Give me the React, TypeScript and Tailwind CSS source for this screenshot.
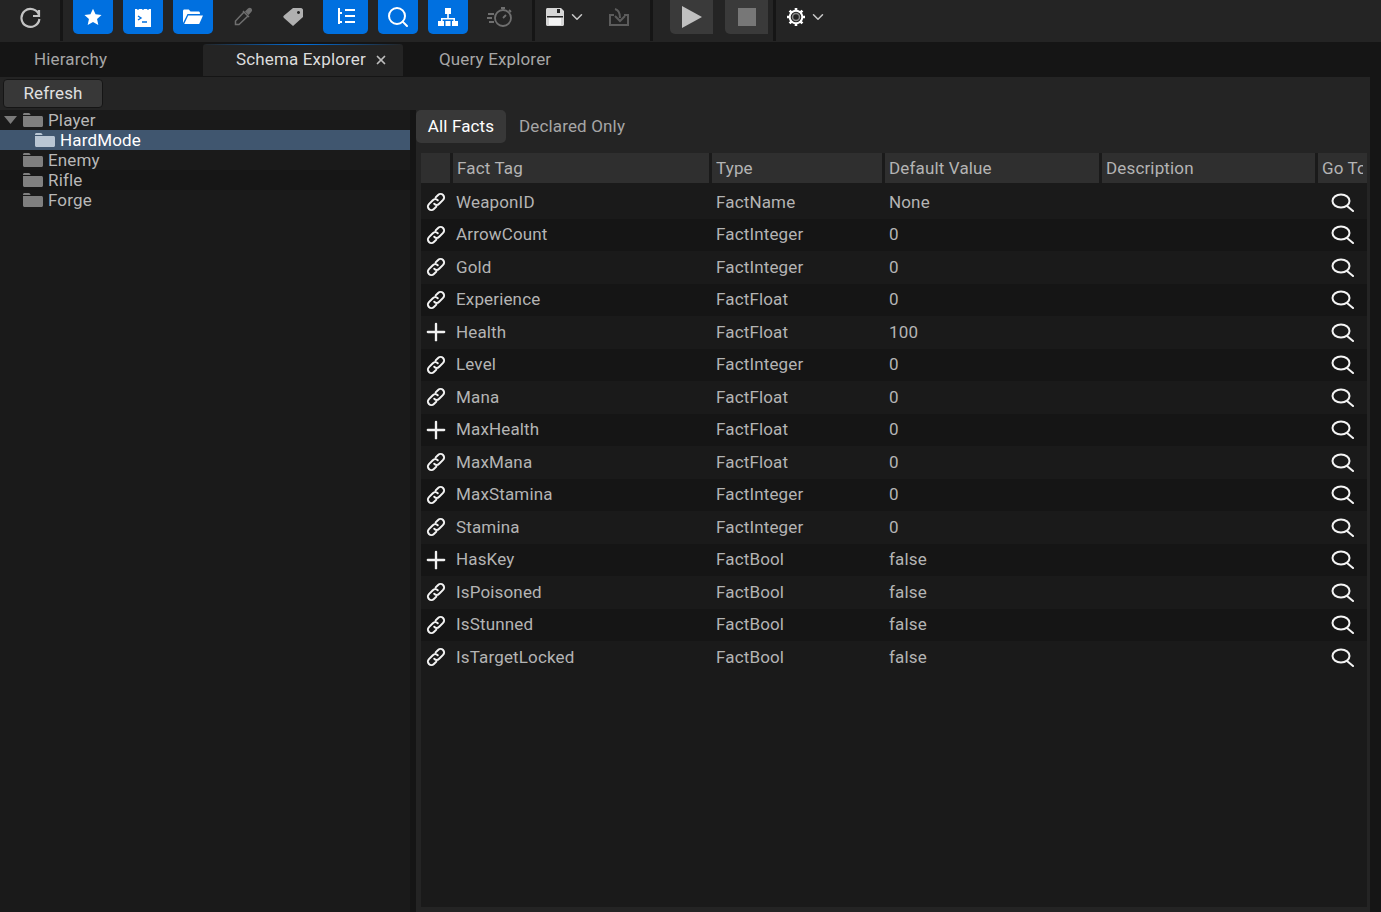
import { ChevronDown, Plus, Search, X } from "lucide-react";
import type { ReactNode } from "react";

const facts: [string, string, string, boolean?][] = [
  ["WeaponID", "FactName", "None"],
  ["ArrowCount", "FactInteger", "0"],
  ["Gold", "FactInteger", "0"],
  ["Experience", "FactFloat", "0"],
  ["Health", "FactFloat", "100", true],
  ["Level", "FactInteger", "0"],
  ["Mana", "FactFloat", "0"],
  ["MaxHealth", "FactFloat", "0", true],
  ["MaxMana", "FactFloat", "0"],
  ["MaxStamina", "FactInteger", "0"],
  ["Stamina", "FactInteger", "0"],
  ["HasKey", "FactBool", "false", true],
  ["IsPoisoned", "FactBool", "false"],
  ["IsStunned", "FactBool", "false"],
  ["IsTargetLocked", "FactBool", "false"],
];

function BlueButton({ w, children }: { w: string; children: ReactNode }) {
  return (
    <div className={`${w} flex h-[34px] items-center justify-center rounded-b-[5px] bg-[#0070e0]`}>
      {children}
    </div>
  );
}

function Divider() {
  return <div className="h-[41px] w-[3px] shrink-0 bg-[#151515]" />;
}

function ChainIcon() {
  return (
    <svg width="20" height="20" viewBox="0 0 20 20" fill="none" stroke="#f2f2f2" strokeWidth="2" strokeLinecap="round" className="overflow-visible">
      <g transform="rotate(-45 10 10)">
        <path d="M7 13.500H3.500a3.500 3.500 0 0 1 0-7H9c2 0 3.500 1.500 3.500 3.500" />
        <path d="M13 6.500h3.500a3.500 3.500 0 0 1 0 7H11c-2 0-3.500-1.500-3.500-3.500" />
      </g>
    </svg>
  );
}

function LookupIcon() {
  return (
    <svg width="24" height="19" viewBox="0 0 24 19" fill="none" stroke="#f4f4f4" strokeWidth="2" strokeLinecap="round">
      <ellipse cx="10" cy="8" rx="8.500" ry="6.500" />
      <path d="m16 13 6 5" />
    </svg>
  );
}

function Folder({ light }: { light?: boolean }) {
  return (
    <svg width="20" height="16" viewBox="0 0 20 16" fill={light ? "#b9c6d4" : "#7f7f7f"}>
      <path d="M0 2.500C0 1.600.6 1 1.500 1h4.200c.6 0 1 .3 1.300.8L7.600 3H0z" />
      <path d="M0 4h18.500c.8 0 1.500.7 1.500 1.500v8c0 .8-.7 1.500-1.500 1.500h-17C.7 15 0 14.300 0 13.500z" />
    </svg>
  );
}

function TreeRow({ label, indent, selected, bg }: { label: string; indent?: boolean; selected?: boolean; bg?: string }) {
  return (
    <div className={`flex h-5 items-center ${selected ? "bg-[#40566f] text-white" : `${bg ?? ""} text-[#b8b8b8]`}`}>
      <div className={`${indent ? "w-[35px]" : "w-[23px]"} shrink-0`} />
      <Folder light={selected} />
      <span className="ml-[5px]">{label}</span>
    </div>
  );
}

function Head({ w, children, last }: { w: string; children?: ReactNode; last?: boolean }) {
  return (
    <div className={`${w} flex h-full shrink-0 items-center bg-[#2f2f2f] px-[4px] pt-[1px] text-[#b4b4b4] ${last ? "" : "mr-[3px]"}`}>
      <div className="overflow-hidden whitespace-nowrap">{children}</div>
    </div>
  );
}

export default function App() {
  return (
    <div className="flex h-[912px] w-[1381px] flex-col overflow-hidden bg-[#151515] text-[17px] tracking-[0.15px] [font-family:Roboto,'Noto_Sans',sans-serif]">
      {/* toolbar */}
      <div className="flex h-[42px] shrink-0 items-start bg-[#242424]">
        <div className="flex h-[34px] w-[60px] shrink-0 items-center justify-center">
          <svg width="24" height="24" viewBox="0 0 24 24" fill="none" stroke="#c4c4c4" strokeWidth="2.200" className="-mt-[1px]">
            <path d="M20 6v6h-6M20 11a9 9 0 1 0 .4 4" transform="translate(1 -1)" />
          </svg>
        </div>
        <Divider />
        <div className="ml-[10px] flex items-start gap-[10px]">
          <BlueButton w="w-[40px]">
            <svg width="18" height="18" viewBox="0 0 24 24" fill="white"><path d="m12 1 3.400 7.400 8 .9-6 5.400 1.700 8L12 18.700l-7.100 4 1.700-8-6-5.400 8-.9z" /></svg>
          </BlueButton>
          <BlueButton w="w-[40px]">
            <svg width="16" height="20" viewBox="0 0 16 20"><path d="M0 2h16v18H0z" fill="white" /><path d="M3 0v3M8 0v3M13 0v3" stroke="#0070e0" strokeWidth="1.200" /><path d="m3 9 3 2-3 2M7 15h5" stroke="#0070e0" strokeWidth="1.400" fill="none" /></svg>
          </BlueButton>
          <BlueButton w="w-[40px]">
            <svg width="20" height="16" viewBox="0 0 20 16" fill="white"><path d="M0 14V2c0-.8.6-1.500 1.400-1.500h4.400L7.500 2.500h8c.8 0 1.400.6 1.400 1.400V5H4.500L0 14z" /><path d="M5.200 6.500H20l-3.800 8.500H1.200z" /></svg>
          </BlueButton>
          <div className="flex h-[34px] w-[40px] items-center justify-center">
            <svg width="20" height="20" viewBox="0 0 20 20" fill="none" stroke="#6f6f6f" strokeWidth="1.500"><path d="M11 5 2.500 14v3.500H6L15 9" /><path d="m10 4 6 6" /><path d="M13 4.500 15.500 2c.8-.7 1.800-.7 2.400 0 .6.700.6 1.600 0 2.300L15.500 7z" fill="#6f6f6f" /></svg>
          </div>
          <div className="flex h-[34px] w-[40px] items-center justify-center">
            <svg width="20" height="18" viewBox="0 0 20 18" fill="#b0b0b0"><path d="M10 0h8c1 0 2 1 2 2v7L10 18 1 10c-1-1-1-1.500 0-2.500zM15.500 3a1.500 1.500 0 1 0 .01 0z" fillRule="evenodd" /></svg>
          </div>
          <BlueButton w="w-[45px]">
            <svg width="18" height="18" viewBox="0 0 18 18" fill="none" stroke="white" strokeWidth="2"><path d="M2 0v16M2 5h3M2 14h3M8 2h10M8 8h10M8 14h10" /></svg>
          </BlueButton>
          <BlueButton w="w-[40px]">
            <Search size={24} color="white" strokeWidth={2} />
          </BlueButton>
          <BlueButton w="w-[40px]">
            <svg width="20" height="18" viewBox="0 0 20 18" fill="white"><path d="M7 0h6v6H7z" /><path d="M9.200 6h1.600v4H17v3h-1.600v-1.500H4.600V13H3v-3h6.200z" /><path d="M0 13h6v5H0zM7.500 13h5v5h-5zM14 13h6v5h-6z" /></svg>
          </BlueButton>
          <div className="flex h-[34px] w-[44px] items-center justify-center">
            <svg width="26" height="20" viewBox="0 0 26 20" fill="none" stroke="#6f6f6f" strokeWidth="1.800"><circle cx="16" cy="11" r="8" /><path d="M16 11l3-3M14 1h4M22 3l2 2M1 7h6M0 11h5M2 15h5" /></svg>
          </div>
        </div>
        <div className="ml-[10px]"><Divider /></div>
        <div className="flex h-[34px] w-[29px] shrink-0 items-center justify-end">
          <svg width="18" height="18" viewBox="0 0 18 18"><path d="M0 1.500C0 .7.700 0 1.500 0H15l3 3v13.500c0 .8-.7 1.500-1.500 1.500h-15C.7 18 0 17.300 0 16.500z" fill="#d6d6d6" /><path d="M11 1h3v4h-3z" fill="#242424" /><path d="M3 10h12v7H3z" fill="#f4f4f4" /><path d="M1 8h16v1.500H1z" fill="#242424" /></svg>
        </div>
        <div className="flex h-[34px] w-[22px] shrink-0 items-center justify-end">
          <ChevronDown size={18} color="#c8c8c8" strokeWidth={2} />
        </div>
        <div className="flex h-[34px] w-[56px] shrink-0 items-center justify-center pl-[10px]">
          <svg width="20" height="18" viewBox="0 0 20 18" fill="none" stroke="#5c5c5c" strokeWidth="2"><path d="M5 7H1v10h18V7h-4" /><path d="M6 1c4 1 5 4 5 9" /><path d="m6 8 5 5 5-5" /></svg>
        </div>
        <div className="ml-[8px]"><Divider /></div>
        <div className="ml-[17px] flex h-[34px] w-[43px] shrink-0 items-center justify-center rounded-bl-[5px] bg-[#3a3a3a]">
          <svg width="20" height="22" viewBox="0 0 20 22" fill="#c0c0c0"><path d="M0 0 20 11 0 22z" /></svg>
        </div>
        <div className="ml-[12px] flex h-[34px] w-[43px] shrink-0 items-center justify-center rounded-bl-[5px] bg-[#3a3a3a]">
          <div className="h-[18px] w-[18px] bg-[#777777]" />
        </div>
        <div className="ml-[5px]"><Divider /></div>
        <div className="ml-[10px] flex h-[34px] shrink-0 items-center gap-[3px]">
          <svg width="20" height="20" viewBox="0 0 20 20" fill="none" stroke="white">
            <circle cx="10" cy="10" r="6.300" strokeWidth="2" />
            <circle cx="10" cy="10" r="3.500" strokeWidth="1.500" stroke="#8a8a8a" />
            <path d="M10 1v3M10 16v3M1 10h3M16 10h3M3.600 3.600l2.100 2.100M14.300 14.300l2.100 2.100M3.600 16.400l2.100-2.100M14.300 5.700l2.100-2.100" strokeWidth="2.600" />
          </svg>
          <ChevronDown size={18} color="#c8c8c8" strokeWidth={2} />
        </div>
      </div>

      {/* tab strip */}
      <div className="flex h-[35px] shrink-0 bg-[#151515]">
        <div className="flex w-[203px] items-center pl-[34px] text-[#a6a6a6]">Hierarchy</div>
        <div className="mb-[1px] mt-[2px] flex w-[200px] flex-col rounded-t-[3px] bg-[#242424]">
          <div className="h-px bg-gradient-to-r from-transparent via-[#0070e0] to-transparent" />
          <div className="flex flex-1 items-center pb-[1px] pl-[33px] text-[#dcdcdc]">
            Schema Explorer
            <X size={14} color="#bdbdbd" strokeWidth={3} className="ml-[8px]" />
          </div>
        </div>
        <div className="flex items-center pl-[36px] text-[#a6a6a6]">Query Explorer</div>
      </div>

      <div className="flex min-h-0 flex-1">
        <div className="flex w-[1370px] flex-col bg-[#242424]">
          <div className="flex h-[33px] shrink-0 items-start pl-[3px] pt-[2px]">
            <div className="flex h-[29px] w-[100px] items-center justify-center rounded-[4px] border border-[#151515] bg-[#383838] text-[#e0e0e0]">
              Refresh
            </div>
          </div>
          <div className="flex min-h-0 flex-1">
            {/* tree */}
            <div className="w-[410px] shrink-0 bg-[#1a1a1a] leading-none">
              <div className="relative">
                <svg width="13" height="8" viewBox="0 0 13 8" fill="#7a7a7a" className="absolute left-[4px] top-[6px]"><path d="M0 0h13L6.500 8z" /></svg>
                <TreeRow label="Player" />
              </div>
              <TreeRow label="HardMode" indent selected />
              <TreeRow label="Enemy" />
              <TreeRow label="Rifle" bg="bg-[#161616]" />
              <TreeRow label="Forge" />
            </div>
            <div className="w-[6px] shrink-0 bg-[#151515]" />
            {/* facts */}
            <div className="flex min-w-0 flex-1 flex-col pb-[5px] pl-[5px] pr-[3px]">
              <div className="-ml-[5px] flex h-[43px] shrink-0 items-start">
                <div className="flex h-[33px] w-[90px] items-center justify-center rounded-[5px] bg-[#383838] text-white">All Facts</div>
                <div className="ml-[13px] flex h-[33px] items-center text-[#a6a6a6]">Declared Only</div>
              </div>
              <div className="flex min-h-0 flex-1 flex-col bg-[#1a1a1a]">
                <div className="flex h-[30px] shrink-0">
                  <Head w="w-[29px]" />
                  <Head w="w-[256px]">Fact Tag</Head>
                  <Head w="w-[170px]">Type</Head>
                  <Head w="w-[214px]">Default Value</Head>
                  <Head w="w-[213px]">Description</Head>
                  <Head w="w-[49px]" last>Go To</Head>
                </div>
                <div className="pt-[3px]">
                  {facts.map(([tag, type, value, added], i) => (
                    <div key={tag} className={`flex h-[32.5px] items-center text-[#b4b4b4] ${i % 2 ? "bg-[#151515]" : "bg-[#1a1a1a]"}`}>
                      <div className={`flex w-[35px] shrink-0 ${added ? "pl-px" : "pl-[5px]"}`}>
                        {added ? <Plus size={28} color="#f2f2f2" strokeWidth={2} /> : <ChainIcon />}
                      </div>
                      <div className="w-[260px] shrink-0">{tag}</div>
                      <div className="w-[173px] shrink-0">{type}</div>
                      <div className="w-[442px] shrink-0">{value}</div>
                      <LookupIcon />
                    </div>
                  ))}
                </div>
              </div>
            </div>
          </div>
        </div>
      </div>
    </div>
  );
}
